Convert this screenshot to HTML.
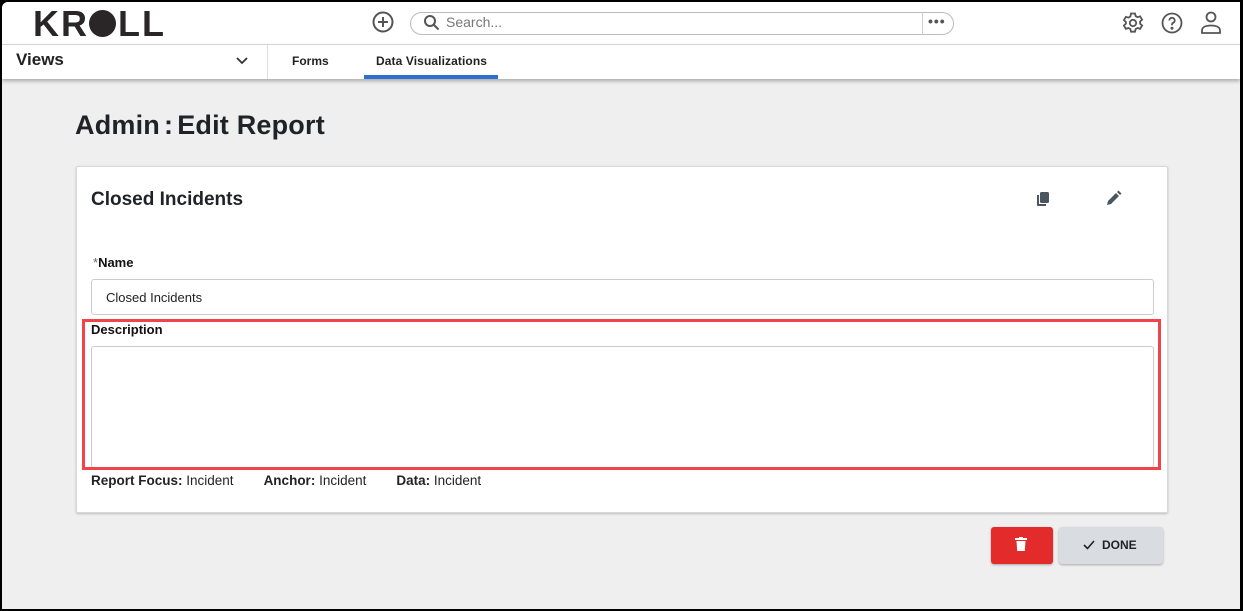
<!DOCTYPE html>
<html><head><style>
*{box-sizing:border-box;margin:0;padding:0}
body{width:1243px;height:611px;overflow:hidden;font-family:"Liberation Sans",sans-serif;background:#000;position:relative}
.frame{position:absolute;left:2px;top:2px;width:1238px;height:607px;background:#efefef;border-radius:6px 0 0 0;overflow:hidden}
.hdr{position:absolute;left:0;top:0;width:100%;height:43px;background:#fff;border-bottom:1px solid #dcdcdc}
.nav{position:absolute;left:0;top:43px;width:100%;height:34px;background:#fff;box-shadow:0 2px 4px rgba(0,0,0,.3)}
.abs{position:absolute}
.card{position:absolute;left:74px;top:164px;width:1092px;height:347px;background:#fff;border:1px solid #d8d8d8;box-shadow:0 1px 2px rgba(0,0,0,.2);border-radius:2px}
.inp{position:absolute;border:1px solid #ccc;border-radius:3px;background:#fff}
.lbl{font-size:13px;font-weight:bold;color:#111}
</style></head><body><div class="frame">
<div class="hdr">
<div class="abs" style="left:31px;top:1px;font-size:36px;font-weight:bold;color:#2a2628;letter-spacing:2px">KR<span style="display:inline-block;width:27px;height:27px;border-radius:50%;background:#2a2628;vertical-align:-1px;margin:0 2px 0 0"></span>LL</div>
<svg class="abs" style="left:369px;top:8px" width="24" height="24" viewBox="0 0 24 24" fill="none" stroke="#555" stroke-width="2"><circle cx="12" cy="12" r="9.5"/><path d="M12 7v10M7 12h10"/></svg>
<div class="abs" style="left:408px;top:10px;width:544px;height:23px;border:1px solid #bbb;border-radius:12px"></div>
<div class="abs" style="left:920px;top:10px;width:1px;height:23px;background:#ccc"></div>
<svg class="abs" style="left:421px;top:12px" width="17" height="17" viewBox="0 0 17 17" fill="none" stroke="#555" stroke-width="2"><circle cx="7" cy="7" r="5"/><path d="M11 11l4.5 4.5"/></svg>
<div class="abs" style="left:444px;top:12px;font-size:14px;color:#777">Search...</div>
<div class="abs" style="left:926px;top:11px;font-size:14px;color:#555;letter-spacing:1px;font-weight:bold">•••</div>
<svg class="abs" style="left:1119px;top:9px" width="24" height="24" viewBox="0 0 24 24" fill="none" stroke="#555" stroke-width="1.8"><circle cx="12" cy="12" r="3.2"/><path d="M10 2.5h4l.6 2.6 2 1.1 2.5-.9 2 3.4-2 1.8v2.2l2 1.8-2 3.4-2.5-.9-2 1.1-.6 2.6h-4l-.6-2.6-2-1.1-2.5.9-2-3.4 2-1.8V11l-2-1.8 2-3.4 2.5.9 2-1.1z"/></svg>
<svg class="abs" style="left:1158px;top:9px" width="24" height="24" viewBox="0 0 24 24" fill="none" stroke="#555" stroke-width="1.8"><circle cx="12" cy="12" r="9.5"/><path d="M9.3 9.5a2.7 2.7 0 1 1 3.7 2.5c-.7.3-1 .8-1 1.6v.6"/><circle cx="12" cy="17.2" r=".6" fill="#555"/></svg>
<svg class="abs" style="left:1197px;top:8px" width="24" height="26" viewBox="0 0 24 26" fill="none" stroke="#555" stroke-width="1.8"><circle cx="12" cy="7" r="4.5"/><path d="M3 23v-2.5c0-3 3-5 9-5s9 2 9 5V23z"/></svg>
</div>
<div class="nav">
<div class="abs" style="left:14px;top:5px;font-size:17px;font-weight:bold;color:#222">Views</div>
<svg class="abs" style="left:233px;top:10px" width="14" height="10" viewBox="0 0 14 10" fill="none" stroke="#333" stroke-width="1.8"><path d="M2 3l5 5 5-5"/></svg>
<div class="abs" style="left:265px;top:0;width:1px;height:34px;background:#ddd"></div>
<div class="abs" style="left:290px;top:9px;font-size:12px;font-weight:bold;color:#222">Forms</div>
<div class="abs" style="left:374px;top:9px;font-size:12px;font-weight:bold;color:#222;letter-spacing:.1px">Data Visualizations</div>
<div class="abs" style="left:362px;top:30px;width:134px;height:4px;background:#2f6fcf"></div>
</div>
<div class="abs" style="left:73px;top:108px;font-size:27px;font-weight:bold;color:#1f2328;letter-spacing:.2px">Admin<span style="margin:0 4px">:</span>Edit Report</div>
<div class="card">
<div class="abs" style="left:14px;top:22px;font-size:19px;font-weight:bold;color:#1f2328">Closed Incidents</div>
<svg class="abs" style="left:958px;top:24px" width="16" height="16" viewBox="0 0 16 16" fill="#4a5560"><rect x="5" y="1" width="9" height="11" rx="1.5"/><path d="M2 4h2v9h7v2H3a1 1 0 0 1-1-1z"/></svg>
<svg class="abs" style="left:1028px;top:23px" width="17" height="17" viewBox="0 0 17 17" fill="#4a5560"><path d="M2 15l1-4 8-8 3 3-8 8zM12 2l1.5-1.5 3 3L15 5z"/></svg>
<div class="abs lbl" style="left:16px;top:88px"><span style="color:#666;font-weight:normal">*</span>Name</div>
<div class="inp" style="left:14px;top:112px;width:1063px;height:36px"></div>
<div class="abs" style="left:29px;top:123px;font-size:13px;color:#222">Closed Incidents</div>
<div class="abs lbl" style="left:14px;top:155px">Description</div>
<div class="inp" style="left:14px;top:179px;width:1063px;height:122px"></div>
<div class="abs" style="left:14px;top:306px;font-size:13.5px;color:#222"><b>Report Focus:</b> Incident<span style="display:inline-block;width:30px"></span><b>Anchor:</b> Incident<span style="display:inline-block;width:30px"></span><b>Data:</b> Incident</div>
</div>
<div class="abs" style="left:80px;top:317px;width:1079px;height:151px;border:3px solid #f2424a"></div>
<div class="abs" style="left:989px;top:525px;width:62px;height:37px;background:#e32b2b;border-radius:3px;box-shadow:0 1px 2px rgba(0,0,0,.3)"></div>
<svg class="abs" style="left:1013px;top:535px" width="12" height="14" viewBox="0 0 12 14" fill="#fff"><rect x="0" y="1" width="12" height="2"/><rect x="4" y="0" width="4" height="2"/><path d="M1.5 4h9l-.7 10H2.2z"/></svg>
<div class="abs" style="left:1057px;top:525px;width:104px;height:37px;background:#d9dce0;border-radius:3px;box-shadow:0 1px 2px rgba(0,0,0,.3)"></div>
<svg class="abs" style="left:1081px;top:537px" width="12" height="12" viewBox="0 0 12 12" fill="none" stroke="#1f2328" stroke-width="1.6"><path d="M1 6l3.5 3.5L11 2"/></svg>
<div class="abs" style="left:1100px;top:536px;font-size:12px;font-weight:bold;color:#1f2328">DONE</div>
</div></body></html>
